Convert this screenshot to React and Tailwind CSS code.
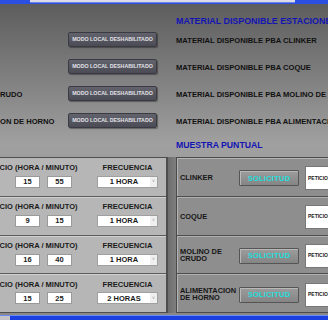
import React from "react";

const font = { fontFamily: '"Liberation Sans", Arial, sans-serif' };

const upperRows = [
  { left: "", right: "MATERIAL DISPONIBLE PBA CLINKER" },
  { left: "", right: "MATERIAL DISPONIBLE PBA COQUE" },
  { left: "RUDO", right: "MATERIAL DISPONIBLE PBA MOLINO DE CRUDO" },
  { left: "ON DE HORNO", right: "MATERIAL DISPONIBLE PBA ALIMENTACION DE HORNO" },
];

const schedule = [
  { h: "15", m: "55", freq: "1 HORA" },
  { h: "9", m: "15", freq: "1 HORA" },
  { h: "16", m: "40", freq: "1 HORA" },
  { h: "15", m: "25", freq: "2 HORAS" },
];

const samples = [
  { label: ["CLINKER"], button: true },
  { label: ["COQUE"], button: false },
  { label: ["MOLINO DE", "CRUDO"], button: true },
  { label: ["ALIMENTACION", "DE HORNO"], button: true },
];

function ModoButton() {
  return (
    <div className="w-[89px] h-[15px] shrink-0 flex items-center justify-center rounded-[2px] border border-[#3a3a42] bg-gradient-to-b from-[#63636e] to-[#4b4b55] shadow-[1px_1px_1px_rgba(0,0,0,0.35)]">
      <span className="text-[5.3px] font-bold text-[#e2e2e6] whitespace-nowrap">MODO LOCAL DESHABILITADO</span>
    </div>
  );
}

function ScheduleRow({ row, last }) {
  return (
    <div className={`flex-1 flex ${last ? "" : "border-b border-[#5c5c5c] shadow-[0_1px_0_#d0d0d0]"}`}>
      <div className="w-[97px] shrink-0 flex flex-col pt-[5px]">
        <div className="h-[10px] flex items-center ml-[-10px] text-[7.5px] font-bold text-[#1a1a1a] whitespace-nowrap">
          INICIO (HORA / MINUTO)
        </div>
        <div className="flex mt-[3px] h-[12px]">
          <div className="ml-[15px] w-[25px] h-full bg-white border border-[#9a9a9a] flex items-center justify-center text-[7.5px] font-bold text-[#1a1a1a]">
            {row.h}
          </div>
          <div className="ml-[7px] w-[25px] h-full bg-white border border-[#9a9a9a] flex items-center justify-center text-[7.5px] font-bold text-[#1a1a1a]">
            {row.m}
          </div>
        </div>
      </div>
      <div className="w-[61px] shrink-0 flex flex-col pt-[5px]">
        <div className="h-[10px] flex items-center justify-center text-[7.6px] font-bold text-[#1a1a1a] whitespace-nowrap">
          FRECUENCIA
        </div>
        <div className="flex mt-[3px] h-[12px] bg-white border border-[#a0a0a0]">
          <div className="flex-1 flex items-center justify-center text-[7.5px] font-bold text-[#1a1a1a] whitespace-nowrap">
            {row.freq}
          </div>
          <div className="w-[7px] flex items-center justify-center bg-[#f0f0f0] text-[5px] text-[#999]">˅</div>
        </div>
      </div>
    </div>
  );
}

function SampleRow({ row, last }) {
  return (
    <div className={`flex-1 flex items-center ${last ? "" : "border-b border-[#4e4e4e] shadow-[0_1px_0_#b0b0b0]"}`}>
      <div className="w-[62px] shrink-0 pl-[3px] pt-[2px] flex flex-col text-[7.4px] leading-[7.6px] font-bold text-[#161616] whitespace-nowrap">
        {row.label.map((l) => (
          <span key={l}>{l}</span>
        ))}
      </div>
      <div className="w-[60px] shrink-0 h-[16px] mt-[3px]">
        {row.button && (
          <div className="w-full h-full flex items-center justify-center rounded-[1px] border border-[#555] bg-gradient-to-b from-[#9c9c9c] to-[#858585] shadow-[inset_1px_1px_0_#b8b8b8]">
            <span className="text-[7.6px] font-bold text-[#22dede] tracking-[0.2px]">SOLICITUD</span>
          </div>
        )}
      </div>
      <div className="ml-[6px] w-[30px] h-[24px] mt-[3px] shrink-0 bg-white border border-[#777] flex items-center pl-[2px]">
        <span className="text-[5px] font-bold text-[#222] whitespace-nowrap">PETICION</span>
      </div>
    </div>
  );
}

export default function App() {
  return (
    <div style={font} className="w-[328px] h-[320px] overflow-hidden flex flex-col bg-[#8a8a8a]">
      {/* top strip */}
      <div className="h-[4px] flex bg-[#2a4fe2]">
        <div className="w-[30px]" />
        <div className="w-[265px] h-[3px] bg-[#dcdce8] border-b border-[#6c84ea]" />
      </div>

      {/* main */}
      <div className="flex-1 flex flex-col bg-gradient-to-b from-[#5d5d5d] via-[#a0a0a0] via-45% to-[#888888]">
        <div className="h-[22px] flex items-start pt-[12px] pl-[176px]">
          <span className="text-[8.9px] leading-[10px] font-bold text-[#1414b4] whitespace-nowrap">MATERIAL DISPONIBLE ESTACIONES</span>
        </div>

        {upperRows.map((r, i) => (
          <div key={i} className="h-[27px] flex items-center">
            <div className="w-[176px] shrink-0 flex items-center">
              <div className="w-[68px] shrink-0 pt-[2px] text-[7.6px] font-bold text-[#111] whitespace-nowrap">{r.left}</div>
              <ModoButton />
            </div>
            <div className="pt-[2px] text-[7.6px] font-bold text-[#111] whitespace-nowrap">{r.right}</div>
          </div>
        ))}

        <div className="h-[23px] flex items-center pl-[176px]">
          <span className="text-[8.7px] font-bold text-[#1414b4] whitespace-nowrap">MUESTRA PUNTUAL</span>
        </div>

        {/* panels */}
        <div className="h-[156px] flex">
          <div className="w-[168px] shrink-0 flex flex-col bg-[#b6b6b6] border-t border-r-2 border-b border-[#4e4e4e]">
            {schedule.map((row, i) => (
              <ScheduleRow key={i} row={row} last={i === schedule.length - 1} />
            ))}
          </div>
          <div className="w-[8px] shrink-0 bg-gradient-to-r from-[#6e6e6e] to-[#7e7e7e]" />
          <div className="flex-1 flex flex-col bg-[#8e8e8e] border-l border-t border-b border-[#4a4a4a] shadow-[inset_1px_1px_0_#b4b4b4]">
            {samples.map((row, i) => (
              <SampleRow key={i} row={row} last={i === samples.length - 1} />
            ))}
          </div>
        </div>
        <div className="h-[2px]" />
      </div>

      {/* bottom bar */}
      <div className="h-[5px] flex bg-[#1b3fe0] border-t border-[#6f8cf0]">
        <div className="w-[10px] bg-[#c4c4c8]" />
      </div>
    </div>
  );
}
